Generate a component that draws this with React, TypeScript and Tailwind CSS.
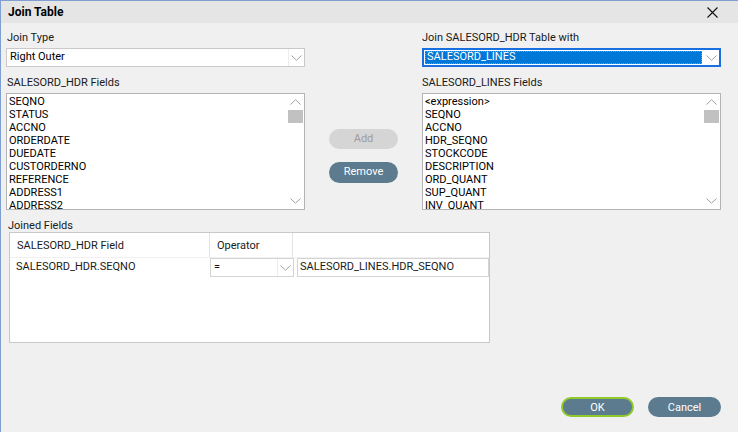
import React from 'react';

const font = { fontFamily: 'Roboto, "Liberation Sans", Arial, sans-serif' };

const hdrFields = ['SEQNO', 'STATUS', 'ACCNO', 'ORDERDATE', 'DUEDATE', 'CUSTORDERNO', 'REFERENCE', 'ADDRESS1', 'ADDRESS2'];
const lineFields = ['<expression>', 'SEQNO', 'ACCNO', 'HDR_SEQNO', 'STOCKCODE', 'DESCRIPTION', 'ORD_QUANT', 'SUP_QUANT', 'INV_QUANT'];

function Chevron({ up = false, className = '' }: { up?: boolean; className?: string }) {
  return (
    <svg width="11" height="6" viewBox="0 0 11 6" className={className}>
      <path d={up ? 'M0.5 5.5 L5.5 0.8 L10.5 5.5' : 'M0.5 0.5 L5.5 5.2 L10.5 0.5'} fill="none" stroke="#a0a0a0" strokeWidth="1" />
    </svg>
  );
}

function Combo({ value }: { value: string }) {
  return (
    <div className="flex h-[19px] border border-[#c9c9c9] bg-white">
      <div className="flex-1 flex items-center pl-[3px] text-black">{value}</div>
      <div className="w-[16px] border-l border-[#ececec] flex items-center justify-center">
        <Chevron />
      </div>
    </div>
  );
}

function ListBox({ items }: { items: string[] }) {
  return (
    <div className="flex h-[117px] border border-[#b4b4b4] bg-white overflow-hidden">
      <div className="flex-1 pt-[1px] pl-[2px] overflow-hidden">
        {items.map((it) => (
          <div key={it} className="h-[13px] leading-[13px] whitespace-nowrap text-black">{it}</div>
        ))}
      </div>
      <div className="w-[17px] flex flex-col items-center bg-white">
        <div className="h-[16px] flex items-center justify-center"><Chevron up /></div>
        <div className="w-[15px] h-[13px] bg-[#c1c1c1]" />
        <div className="flex-1" />
        <div className="h-[16px] flex items-center justify-center"><Chevron /></div>
      </div>
    </div>
  );
}

export default function App() {
  return (
    <div style={font} className="w-[738px] h-[432px] bg-[#f0f0f0] border-l border-t border-[#7f9ed2] flex flex-col text-[11px] text-[#1a1a1a] overflow-hidden">
      <div className="h-[22px] bg-[#e5e5e5] flex items-center justify-between pl-[7px] pr-[20px]">
        <span className="font-bold text-black text-[12px]">Join Table</span>
        <svg width="11" height="11" viewBox="0 0 11 11">
          <path d="M0.5 0.5 L10.5 10.5 M10.5 0.5 L0.5 10.5" stroke="#111" strokeWidth="1.1" />
        </svg>
      </div>

      <div className="flex-1 flex flex-col pl-[5px] pr-[17px] pt-[8px]">
        <div className="grid grid-cols-[299px_1fr_299px]">
          <div className="flex flex-col">
            <div className="h-[13px] leading-[13px] pl-[1px]">Join Type</div>
            <div className="mt-[4px]"><Combo value="Right Outer" /></div>
            <div className="h-[13px] leading-[13px] mt-[9px] pl-[1px]">SALESORD_HDR Fields</div>
            <div className="mt-[4px]"><ListBox items={hdrFields} /></div>
          </div>

          <div className="flex flex-col items-center pt-[98px] gap-[13px]">
            <button className="w-[69px] h-[20px] rounded-full bg-[#d5d5d5] text-[#9d9d9d]">Add</button>
            <button className="w-[69px] h-[21px] rounded-full bg-[#5c7b8f] text-white">Remove</button>
          </div>

          <div className="flex flex-col">
            <div className="h-[13px] leading-[13px]">Join SALESORD_HDR Table with</div>
            <div className="mt-[4px] flex h-[19px] border-2 border-[#1a6fe0] bg-white">
              <div className="flex-1 m-[1px] flex items-center bg-[#0078d7] text-white outline-1 outline-dotted outline-[#e08a00] -outline-offset-1 pl-[2px]">SALESORD_LINES</div>
              <div className="w-[16px] flex items-center justify-center"><Chevron /></div>
            </div>
            <div className="h-[13px] leading-[13px] mt-[9px]">SALESORD_LINES Fields</div>
            <div className="mt-[4px]"><ListBox items={lineFields} /></div>
          </div>
        </div>

        <div className="h-[13px] leading-[13px] mt-[9px] pl-[2px]">Joined Fields</div>
        <div className="ml-[3px] w-[481px] h-[111px] border border-[#c8c8c8] bg-white flex flex-col">
          <div className="h-[25px] flex border-b border-[#f0f0f0] text-[#1a1a1a]">
            <div className="w-[200px] flex items-center pl-[7px] pt-[2px] border-r border-[#e3e3e3]">SALESORD_HDR Field</div>
            <div className="w-[83px] flex items-center pl-[7px] pt-[2px] border-r border-[#e3e3e3]">Operator</div>
            <div className="flex-1" />
          </div>
          <div className="h-[19px] flex items-stretch">
            <div className="w-[200px] flex items-center pl-[6px]">SALESORD_HDR.SEQNO</div>
            <div className="w-[84px] flex border border-[#d4d4d4] bg-white">
              <div className="flex-1 flex items-center pl-[3px]">=</div>
              <div className="w-[16px] border-l border-[#ececec] flex items-center justify-center"><Chevron /></div>
            </div>
            <div className="ml-[3px] w-[192px] flex items-center border border-[#d4d4d4] pl-[2px]">SALESORD_LINES.HDR_SEQNO</div>
          </div>
        </div>

        <div className="flex-1" />
        <div className="flex justify-end gap-[14px] mb-[15px]">
          <button className="w-[73px] h-[20px] rounded-full bg-[#5c7b8f] text-white border-2 border-[#8fca2c] leading-none">OK</button>
          <button className="w-[73px] h-[20px] rounded-full bg-[#5c7b8f] text-white leading-none">Cancel</button>
        </div>
      </div>
    </div>
  );
}
